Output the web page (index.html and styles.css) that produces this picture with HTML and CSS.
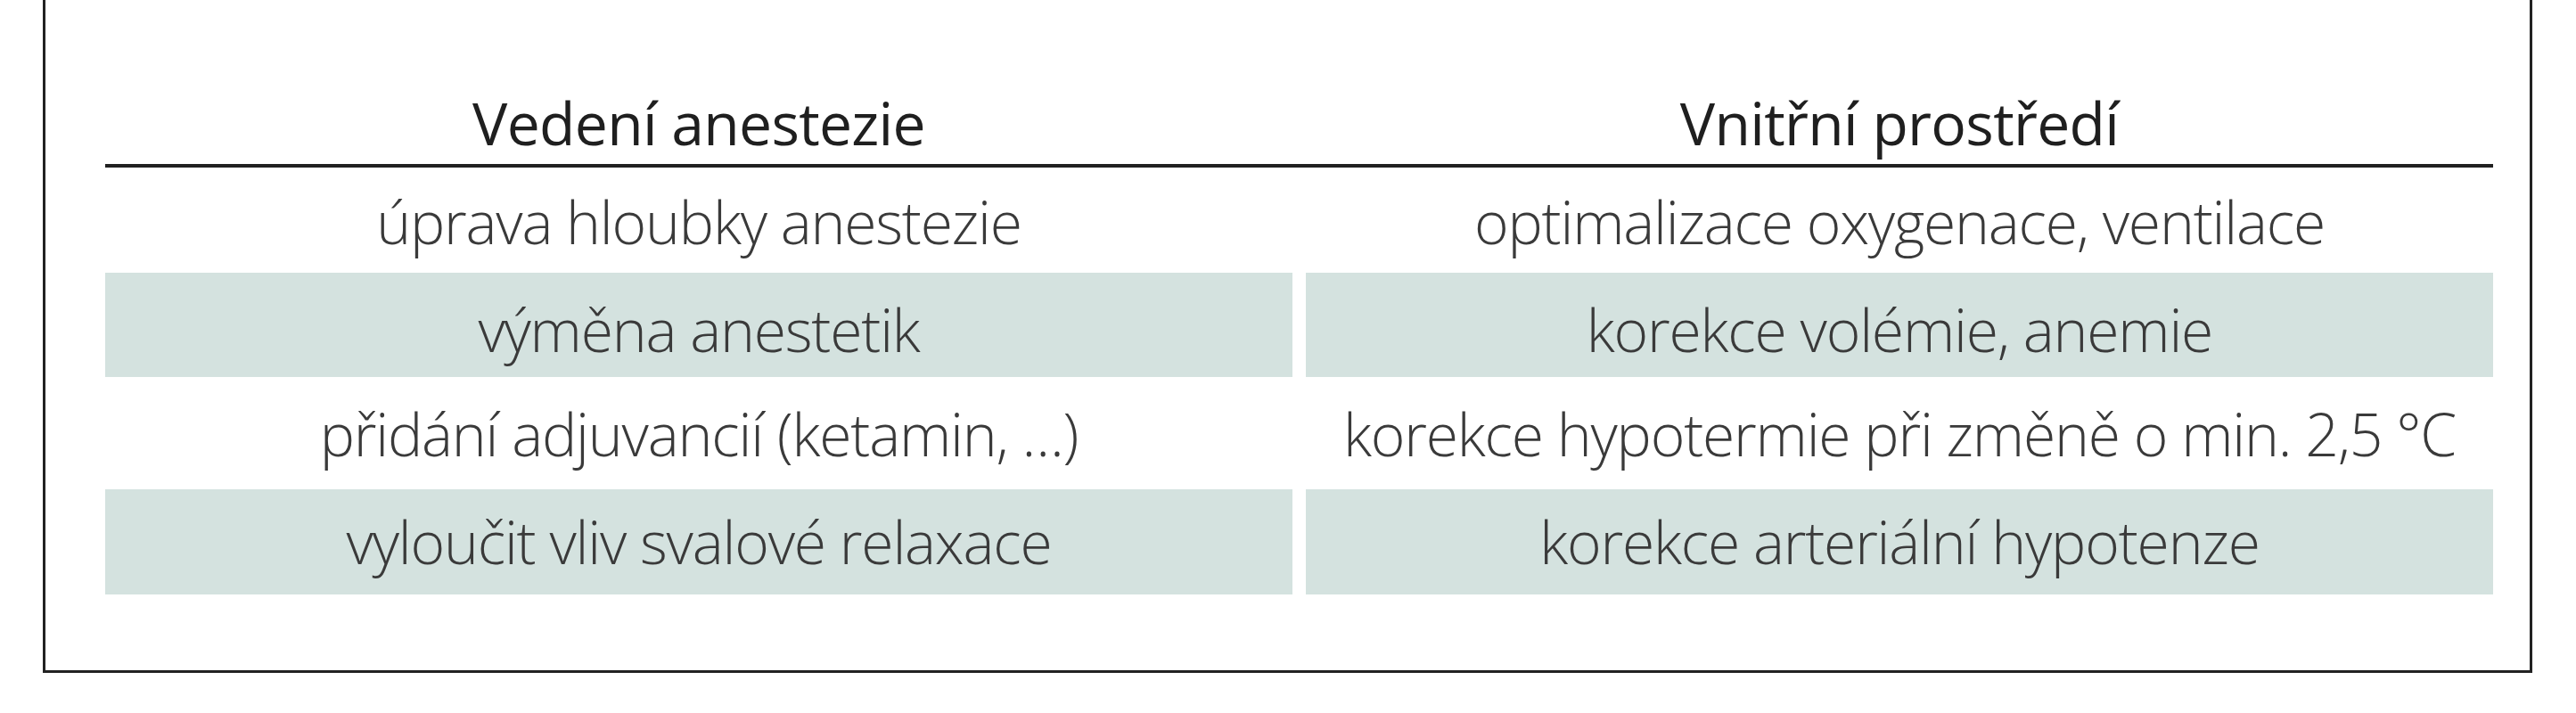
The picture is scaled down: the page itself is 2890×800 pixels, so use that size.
FILE: index.html
```html
<!DOCTYPE html>
<html lang="cs">
<head>
<meta charset="utf-8">
<title>Vedení anestezie / Vnitřní prostředí</title>
<link rel="stylesheet" href="styles.css">
</head>
<body>
<div class="frame">
  <div class="table">
    <div class="thead">
      <div class="th">Vedení anestezie</div>
      <div class="th">Vnitřní prostředí</div>
    </div>
    <div class="row r1">
      <div class="td">úprava hloubky anestezie</div>
      <div class="td">optimalizace oxygenace, ventilace</div>
    </div>
    <div class="row r2 shaded">
      <div class="td">výměna anestetik</div>
      <div class="td">korekce volémie, anemie</div>
    </div>
    <div class="row r3">
      <div class="td">přidání adjuvancií (ketamin, …)</div>
      <div class="td">korekce hypotermie při změně o min. 2,5 °C</div>
    </div>
    <div class="row r4 shaded">
      <div class="td">vyloučit vliv svalové relaxace</div>
      <div class="td">korekce arteriální hypotenze</div>
    </div>
  </div>
</div>
</body>
</html>
```
FILE: styles.css
```css
html, body {
  margin: 0;
  padding: 0;
  background: #ffffff;
}

body {
  font-family: "Open Sans", "Noto Sans", sans-serif;
}

.frame {
  box-sizing: border-box;
  width: 2793px;
  margin-left: 48px;
  padding: 0 41px 85px 67px;
  border: 3px solid #222222;
  border-top: none;
}

.table {
  width: 2679px;
}

.thead,
.row {
  display: grid;
  grid-template-columns: 1fr 1fr;
  column-gap: 15px;
}

.thead {
  border-bottom: 4px solid #202020;
}

.th {
  height: 184px;
  box-sizing: border-box;
  padding-top: 92px;
  font-size: 66px;
  line-height: 90px;
  font-weight: 400;
  letter-spacing: -0.7px;
  color: #1f1f1f;
  text-align: center;
  white-space: nowrap;
}

.td {
  box-sizing: border-box;
  font-size: 66px;
  line-height: 90px;
  font-weight: 300;
  letter-spacing: -1.2px;
  color: #3a3a3a;
  text-align: center;
  white-space: nowrap;
}

.r1 .td { height: 118px; padding-top: 15px; }
.r2 .td { height: 117px; padding-top: 18px; }
.r3 .td { height: 126px; padding-top: 18px; }
.r4 .td { height: 118px; padding-top: 13px; }

.shaded .td {
  background: #d4e2df;
}
```
